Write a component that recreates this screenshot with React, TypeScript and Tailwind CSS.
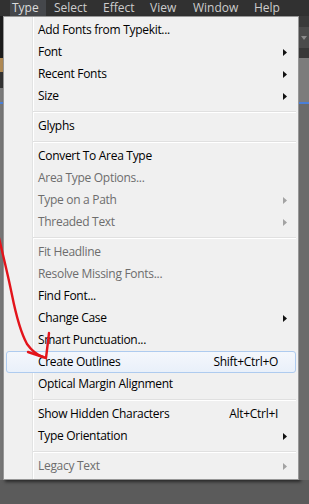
import React from "react";

type Item =
  | { sep: true }
  | { sep?: false; t: string; dis?: boolean; sub?: boolean; sc?: string; hi?: boolean };

const items: Item[] = [
  { t: "Add Fonts from Typekit..." },
  { t: "Font", sub: true },
  { t: "Recent Fonts", sub: true },
  { t: "Size", sub: true },
  { sep: true },
  { t: "Glyphs" },
  { sep: true },
  { t: "Convert To Area Type" },
  { t: "Area Type Options...", dis: true },
  { t: "Type on a Path", dis: true, sub: true },
  { t: "Threaded Text", dis: true, sub: true },
  { sep: true },
  { t: "Fit Headline", dis: true },
  { t: "Resolve Missing Fonts...", dis: true },
  { t: "Find Font..." },
  { t: "Change Case", sub: true },
  { t: "Smart Punctuation..." },
  { t: "Create Outlines", sc: "Shift+Ctrl+O", hi: true },
  { t: "Optical Margin Alignment" },
  { sep: true },
  { t: "Show Hidden Characters", sc: "Alt+Ctrl+I" },
  { t: "Type Orientation", sub: true },
  { sep: true },
  { t: "Legacy Text", dis: true, sub: true },
];

function Arrow({ dis }: { dis?: boolean }) {
  return (
    <svg width="4" height="7" viewBox="0 0 4 7" className="ml-[5px]">
      <polygon points="0,0 4,3.5 0,7" fill={dis ? "#a3a3a3" : "#111"} />
    </svg>
  );
}

export default function App() {
  return (
    <div
      className="relative w-[309px] h-[504px] overflow-hidden bg-[#5b5b5b] flex flex-col"
      style={{ fontFamily: '"Open Sans", "Noto Sans", sans-serif' }}
    >
      {/* menu bar */}
      <div className="h-[16px] bg-[#313131] grid grid-cols-[10px_36px_57px_47px_43px_61px_1fr] text-[12px] leading-[16px] text-[#cdcdcd] whitespace-nowrap">
        <div />
        <div className="pl-[2px] bg-[#45474b] text-[#dcdcdc]">Type</div>
        <div className="pl-[8px]">Select</div>
        <div>Effect</div>
        <div>View</div>
        <div>Window</div>
        <div>Help</div>
      </div>

      <div className="flex items-start">
        {/* left strip */}
        <div className="w-[3px] shrink-0 flex flex-col">
          <div className="h-[42px] bg-[#1c1c1c]" />
          <div className="h-[14px] bg-[#b08a55]" />
          <div className="h-[16px] bg-[#333333]" />
          <div className="h-[14px] bg-[#7a7a7a]" />
          <div className="h-[2px] bg-[#4a7fd8]" />
          <div className="h-[376px] bg-[#767676]" />
        </div>

        {/* menu */}
        <div className="w-[296px] shrink-0 h-[464px] border border-[#979797] py-[2px] shadow-[2px_2px_3px_rgba(0,0,0,0.55)] text-[12px] leading-[16px] tracking-[-0.3px] bg-[linear-gradient(to_right,#f0f0f0_28px,#e2e3e3_28px,#e2e3e3_29px,#ffffff_29px,#ffffff_30px,#f0f0f0_30px)]">
          {items.map((it, i) =>
            it.sep ? (
              <div key={i} className="h-[8px] pt-[4px] ml-[29px] mr-[2px]">
                <div className="h-[2px] border-t border-t-[#e0e0e0] border-b border-b-white" />
              </div>
            ) : (
              <div
                key={i}
                className={
                  "h-[22px] mx-[2px] border rounded-[3px] flex items-center pl-[31px] " +
                  (it.hi
                    ? "border-[#aecbef] bg-[linear-gradient(to_bottom,#f4f7fc,#e9f0fa)]"
                    : "border-transparent")
                }
              >
                <span className={"flex-1 " + (it.dis ? "text-[#6d6d6d]" : "text-[#000000]")}>
                  {it.t}
                </span>
                {it.sc && <span className="text-black">{it.sc}</span>}
                <div className="w-[17px] flex items-center">{it.sub && <Arrow dis={it.dis} />}</div>
              </div>
            )
          )}
        </div>

        {/* right strip */}
        <div className="flex-1 flex flex-col">
          <div className="h-[11px] bg-[#3a3a3a]" />
          <div className="h-[21px] bg-[#4b4b4b] flex items-center justify-end pr-[2px]">
            <svg width="6" height="4" viewBox="0 0 6 4">
              <polygon points="0,0 6,0 3,4" fill="#8a8a8a" />
            </svg>
          </div>
          <div className="h-[10px] bg-[#383838]" />
          <div className="h-[44px] bg-[#7c7c7c]" />
          <div className="h-[2px] bg-[#4a7fd8]" />
          <div className="h-[376px] bg-[#6b6b6b]" />
        </div>
      </div>

      {/* red annotation */}
      <svg
        className="absolute left-0 top-0 pointer-events-none"
        width="309"
        height="504"
        viewBox="0 0 309 504"
      >
        <path
          d="M -1 238 C 3 255, 8 275, 12 295 C 16 315, 21 333, 27 344 C 32 351, 37 355, 43 357"
          fill="none"
          stroke="#e3141b"
          strokeWidth="2.4"
          strokeLinecap="round"
        />
        <path
          d="M 49 333 C 48 342, 47 350, 46 358 M 28 352 L 46 358"
          fill="none"
          stroke="#e3141b"
          strokeWidth="2.4"
          strokeLinecap="round"
          strokeLinejoin="round"
        />
      </svg>
    </div>
  );
}
